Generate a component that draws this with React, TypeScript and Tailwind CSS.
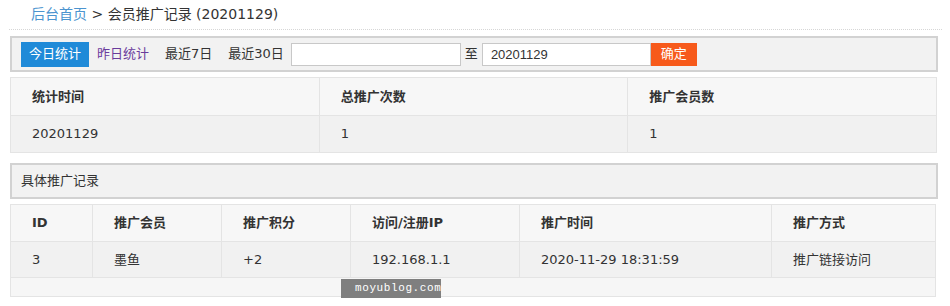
import React from 'react';

const FONT = "font-['DejaVu_Sans','Noto_Sans_CJK_SC',sans-serif]";

const statCols = ['统计时间', '总推广次数', '推广会员数'];
const statRow = ['20201129', '1', '1'];

const detailCols = [
  { label: 'ID', w: 'w-[82px]' },
  { label: '推广会员', w: 'w-[129px]' },
  { label: '推广积分', w: 'w-[129px]' },
  { label: '访问/注册IP', w: 'w-[169px]' },
  { label: '推广时间', w: 'w-[252px]' },
  { label: '推广方式', w: '' },
];
const detailRow = ['3', '墨鱼', '+2', '192.168.1.1', '2020-11-29 18:31:59', '推广链接访问'];

export default function App() {
  return (
    <div className={`relative w-[950px] h-[306px] bg-white text-[13px] text-[#333] ${FONT}`}>
      {/* breadcrumb */}
      <div className="h-[29px] pl-[31px] pt-[5px] text-[14px] leading-[18px]">
        <a href="#" className="text-[#4b94cf]">后台首页</a>
        <span> &gt; 会员推广记录 (20201129)</span>
      </div>
      <div className="ml-[9px] w-[933px] border-t border-dotted border-[#d6d6d6]" />

      {/* toolbar */}
      <div className="mt-[6px] ml-[10px] w-[928px] h-[36px] border-2 border-[#d2d2d2] bg-[#f2f2f2] flex items-center pl-[9px]">
        <span className="h-[25px] px-2 flex items-center bg-[#1f8ad8] text-white">今日统计</span>
        <a href="#" className="px-2 text-[#6a3b9c]">昨日统计</a>
        <a href="#" className="px-2 text-[#333]">最近7日</a>
        <a href="#" className="pl-2 pr-[7px] text-[#333]">最近30日</a>
        <input className="w-[170px] h-[23px] border border-[#c8c8c8] bg-white px-2 text-[13px] font-['Liberation_Sans',sans-serif] outline-none" />
        <span className="px-[4px]">至</span>
        <input
          defaultValue="20201129"
          className="w-[169px] h-[23px] border border-[#c8c8c8] bg-white px-[8px] text-[13px] font-['Liberation_Sans',sans-serif] outline-none"
        />
        <button className="w-[46px] h-[23px] bg-[#f75a1b] text-white text-[13px]">确定</button>
      </div>

      {/* stats table */}
      <table className="mt-[5px] ml-[10px] w-[927px] border-collapse table-fixed">
        <thead>
          <tr className="bg-[#f7f7f7] h-[38px]">
            {statCols.map((c) => (
              <th key={c} className="border border-[#e4e4e4] text-left font-bold pl-[21px]">{c}</th>
            ))}
          </tr>
        </thead>
        <tbody>
          <tr className="bg-[#f1f1f1] h-[37px]">
            {statRow.map((c, i) => (
              <td key={i} className="border border-[#e4e4e4] pl-[21px]">{c}</td>
            ))}
          </tr>
        </tbody>
      </table>

      {/* section title */}
      <div className="mt-[10px] ml-[10px] w-[928px] h-[36px] border-2 border-[#d2d2d2] bg-[#f2f2f2] flex items-center pl-[9px]">
        具体推广记录
      </div>

      {/* detail table */}
      <table className="mt-[5px] ml-[10px] w-[926px] border-collapse table-fixed">
        <thead>
          <tr className="bg-[#f7f7f7] h-[37px]">
            {detailCols.map((c) => (
              <th key={c.label} className={`${c.w} border border-[#e4e4e4] text-left font-bold pl-[21px]`}>{c.label}</th>
            ))}
          </tr>
        </thead>
        <tbody>
          <tr className="bg-[#f1f1f1] h-[36px]">
            {detailRow.map((c, i) => (
              <td key={i} className="border border-[#e4e4e4] pl-[21px]">{c}</td>
            ))}
          </tr>
          <tr className="bg-[#f6f6f6] h-[19px]">
            <td colSpan={6} className="border border-[#e4e4e4]" />
          </tr>
        </tbody>
      </table>

      {/* watermark */}
      <div className="absolute left-[341px] top-[279px] w-[100px] h-[19px] bg-[#7f7f7f] text-white text-[11px] leading-[19px] tracking-[0.6px] pl-[14px] whitespace-nowrap overflow-hidden font-['Liberation_Mono',monospace]">
        moyublog.com
      </div>
    </div>
  );
}
